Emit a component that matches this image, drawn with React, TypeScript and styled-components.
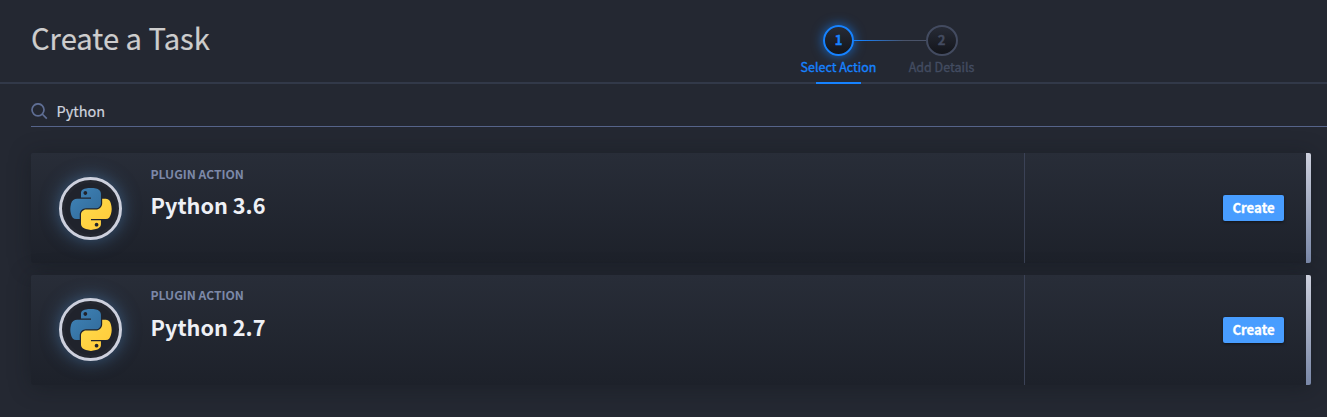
import React from "react";
import styled, { createGlobalStyle } from "styled-components";

const GlobalStyle = createGlobalStyle`
  * { box-sizing: border-box; }
  body {
    margin: 0;
    background: #242832;
    font-family: "Noto Sans CJK SC", "Noto Sans", sans-serif;
    overflow: hidden;
  }
`;

const Page = styled.div`
  height: 417px;
  overflow: hidden;
`;

const Header = styled.header`
  display: flex;
  height: 84px;
  padding-left: 31px;
  border-bottom: 2px solid #323949;
`;

const Title = styled.h1`
  flex: 0 0 756px;
  margin: 0;
  padding-top: 15px;
  font-size: 29.2px;
  line-height: 44px;
  font-weight: 400;
  -webkit-text-stroke: 0.2px currentColor;
  color: #cdcdcd;
`;

const Stepper = styled.nav`
  display: grid;
  grid-template-columns: 103px 103px;
  grid-template-rows: 31px 23px 2px;
  justify-items: center;
  align-items: center;
  padding-top: 25px;
  height: 84px;
`;

const StepCircle = styled.div<{ $active?: boolean; $column: number }>`
  grid-row: 1;
  grid-column: ${(p) => p.$column};
  width: ${(p) => (p.$active ? 31 : 32)}px;
  height: 31px;
  border-radius: 50%;
  border: 2px solid ${(p) => (p.$active ? "#1682ff" : "#434b60")};
  background: linear-gradient(#272b36, #13151b);
  box-shadow: ${(p) => (p.$active ? "0 0 12px rgba(22, 130, 255, 0.7)" : "none")};
  color: ${(p) => (p.$active ? "#1682ff" : "#434b60")};
  font-size: 13px;
  line-height: 26px;
  font-weight: 700;
  -webkit-text-stroke: 0.4px currentColor;
  text-align: center;
`;

const Connector = styled.div`
  grid-row: 1;
  grid-column: 1 / 3;
  width: 72px;
  height: 1px;
  background: linear-gradient(90deg, #1682ff 10%, #4a5369 70%);
`;

const StepLabel = styled.span<{ $active?: boolean; $column: number }>`
  grid-row: 2;
  grid-column: ${(p) => p.$column};
  font-size: 12.5px;
  line-height: 18px;
  padding-bottom: 1px;
  white-space: nowrap;
  -webkit-text-stroke: 0.35px currentColor;
  color: ${(p) => (p.$active ? "#1682ff" : "#434c61")};
`;

const ActiveMarker = styled.div`
  grid-row: 3;
  grid-column: 1;
  align-self: end;
  width: 45px;
  height: 2px;
  margin-top: 2px;
  margin-bottom: -3px;
  background: #1682ff;
`;

const SearchBar = styled.div`
  display: flex;
  align-items: center;
  gap: 8.5px;
  height: 43px;
  margin-left: 31px;
  padding-top: 12px;
  border-bottom: 1px solid #56648a;
`;

const SearchText = styled.span`
  font-size: 14.5px;
  line-height: 20px;
  -webkit-text-stroke: 0.2px currentColor;
  color: #cfd3de;
`;

const Results = styled.main`
  display: flex;
  flex-direction: column;
  gap: 11.5px;
  padding: 26px 16px 0 31px;
`;

const Card = styled.article`
  display: flex;
  height: 110px;
  border-radius: 2px;
  background: linear-gradient(#282d38, #1d212a);
  box-shadow: 0 2px 22px rgba(16, 19, 26, 0.4);
`;

const CardMain = styled.div`
  display: flex;
  flex: 1;
  padding-left: 28px;
`;

const LogoRing = styled.div`
  display: flex;
  align-items: center;
  justify-content: center;
  width: 63px;
  height: 63px;
  margin-top: 23.7px;
  padding-top: 1.2px;
  border: 3px solid #cdd0dd;
  border-radius: 50%;
  background: #20232c;
  box-shadow: 0 0 18px rgba(84, 144, 205, 0.5), inset 0 0 0 3px #242730;
`;

const CardText = styled.div`
  display: flex;
  flex-direction: column;
  padding: 11.7px 0 0 28.5px;
`;

const Category = styled.span`
  font-size: 12.1px;
  line-height: 18px;
  font-weight: 700;
  color: #7c88a8;
`;

const Name = styled.h2`
  margin: 6.7px 0 0;
  font-size: 21.7px;
  line-height: 32px;
  font-weight: 700;
  color: #eef0f5;
`;

const CardActions = styled.div`
  display: flex;
  align-items: center;
  justify-content: flex-end;
  width: 282px;
  padding-right: 22px;
  border-left: 1px solid #3b4256;
`;

const CreateButton = styled.button`
  width: 61px;
  height: 26px;
  padding: 0;
  border: 0;
  border-radius: 2px;
  background: #489dff;
  box-shadow: 0 1px 3px rgba(0, 0, 0, 0.5);
  font-family: inherit;
  font-size: 13.2px;
  line-height: 26px;
  font-weight: 700;
  -webkit-text-stroke: 0.3px currentColor;
  color: #fff;
`;

const Accent = styled.div`
  width: 5px;
  border-radius: 0 2px 2px 0;
  background: linear-gradient(#cdd0dd, #7987a7);
`;

const SearchIcon = () => (
  <svg width="17" height="17" viewBox="0 0 17 17" fill="none" stroke="#5f6e94" strokeWidth="1.7">
    <circle cx="7" cy="6.8" r="6" />
    <path d="M11.2 11 L15.8 15.6" />
  </svg>
);

const PythonLogo = () => (
  <svg width="42" height="42" viewBox="12.7 1.9 102.6 103.9">
    <defs>
      <linearGradient id="pyBlue" x1="0" y1="0" x2="1" y2="1">
        <stop offset="0" stopColor="#4084b8" />
        <stop offset="1" stopColor="#306998" />
      </linearGradient>
      <linearGradient id="pyYellow" x1="0" y1="0" x2="1" y2="1">
        <stop offset="0" stopColor="#ffdc4c" />
        <stop offset="1" stopColor="#ffc938" />
      </linearGradient>
    </defs>
    <path
      fill="url(#pyBlue)"
      d="M63.391 1.988c-4.222.02-8.252.379-11.8 1.007-10.45 1.846-12.346 5.71-12.346 12.837v9.411h24.693v3.137H29.977c-7.176 0-13.46 4.313-15.426 12.521-2.268 9.405-2.368 15.275 0 25.096 1.755 7.311 5.947 12.519 13.124 12.519h8.491V67.234c0-8.151 7.051-15.34 15.426-15.34h24.665c6.866 0 12.346-5.654 12.346-12.548V15.833c0-6.693-5.646-11.72-12.346-12.837-4.244-.706-8.645-1.027-12.866-1.008zM50.037 9.557c2.55 0 4.634 2.117 4.634 4.721 0 2.593-2.083 4.69-4.634 4.69-2.56 0-4.633-2.097-4.633-4.69-.001-2.604 2.073-4.721 4.633-4.721z"
    />
    <path
      fill="url(#pyYellow)"
      d="M91.682 28.38v10.966c0 8.5-7.208 15.655-15.426 15.655H51.591c-6.756 0-12.346 5.783-12.346 12.549v23.515c0 6.691 5.818 10.628 12.346 12.547 7.816 2.297 15.312 2.713 24.665 0 6.216-1.801 12.346-5.423 12.346-12.547v-9.412H63.938v-3.138h37.012c7.176 0 9.852-5.005 12.348-12.519 2.578-7.735 2.467-15.174 0-25.096-1.774-7.145-5.161-12.521-12.348-12.521h-9.268zM77.809 87.927c2.561 0 4.634 2.097 4.634 4.692 0 2.602-2.074 4.719-4.634 4.719-2.55 0-4.633-2.117-4.633-4.719 0-2.595 2.083-4.692 4.633-4.692z"
    />
  </svg>
);

const actions = ["Python 3.6", "Python 2.7"];

export default function App() {
  return (
    <Page>
      <GlobalStyle />
      <Header>
        <Title>Create a Task</Title>
        <Stepper>
          <Connector />
          <StepCircle $active $column={1}>1</StepCircle>
          <StepCircle $column={2}>2</StepCircle>
          <StepLabel $active $column={1}>Select Action</StepLabel>
          <StepLabel $column={2}>Add Details</StepLabel>
          <ActiveMarker />
        </Stepper>
      </Header>
      <SearchBar>
        <SearchIcon />
        <SearchText>Python</SearchText>
      </SearchBar>
      <Results>
        {actions.map((name) => (
          <Card key={name}>
            <CardMain>
              <LogoRing>
                <PythonLogo />
              </LogoRing>
              <CardText>
                <Category>PLUGIN ACTION</Category>
                <Name>{name}</Name>
              </CardText>
            </CardMain>
            <CardActions>
              <CreateButton>Create</CreateButton>
            </CardActions>
            <Accent />
          </Card>
        ))}
      </Results>
    </Page>
  );
}
